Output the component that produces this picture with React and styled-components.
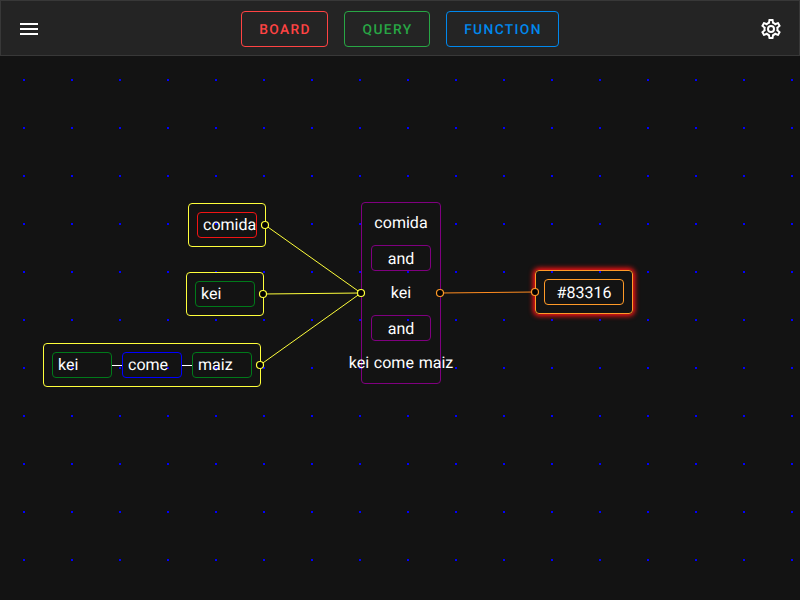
import React from 'react';
import styled, { createGlobalStyle } from 'styled-components';

const GlobalStyle = createGlobalStyle`
  *, *::before, *::after { box-sizing: border-box; }
  body {
    margin: 0;
    background: #131313;
    color: #fff;
    font-family: Roboto, sans-serif;
    font-size: 16px;
    line-height: 24px;
    text-rendering: geometricPrecision;
    overflow: hidden;
  }
`;

const Page = styled.div`
  display: flex;
  flex-direction: column;
  width: 800px;
  height: 600px;
`;

const Toolbar = styled.header`
  flex: none;
  display: flex;
  align-items: center;
  justify-content: space-between;
  height: 56px;
  padding: 2px 16px 0;
  background: #242424;
  border: 1px solid #383838;
`;

const IconButton = styled.button`
  display: flex;
  padding: 0;
  border: 0;
  background: none;
  color: #fff;
`;

const Icon = styled.svg`
  width: 24px;
  height: 24px;
  fill: currentColor;
`;

const Actions = styled.nav`
  display: flex;
  gap: 16px;
`;

const ActionButton = styled.button`
  width: ${(p) => p.$width}px;
  height: 36px;
  padding: 1px 0 0 1px;
  border: 1px solid ${(p) => p.$color};
  border-radius: 4px;
  background: none;
  color: ${(p) => p.$color};
  font: 500 13.8px Roboto, sans-serif;
  letter-spacing: 1.35px;
  text-rendering: geometricPrecision;
`;

const Canvas = styled.main`
  flex: 1;
  position: relative;
  background: conic-gradient(from 270deg at 2px 2px, #0000ff 90deg, transparent 0) 23px 23px / 48px 48px;
`;

const Edges = styled.svg`
  position: absolute;
  inset: 0;
  width: 100%;
  height: 100%;
`;

const Node = styled.div`
  position: absolute;
  left: ${(p) => p.$x}px;
  top: ${(p) => p.$y}px;
  display: flex;
  padding: 8px;
  border: 1px solid ${(p) => p.$color};
  border-radius: 4px;
  box-shadow: ${(p) => (p.$selected ? '0 0 5px 2px #ff1414' : 'none')};
`;

const OperatorNode = styled(Node)`
  flex-direction: column;
  align-items: center;
  gap: 9px;
  width: 80px;
  height: 182px;
  padding: 7px 9px;
`;

const Term = styled.div`
  width: ${(p) => p.$width || 60}px;
  height: 26px;
  padding: ${(p) => (p.$center && p.$color ? '1px 5px 0' : '0 5px')};
  border: 1px solid ${(p) => p.$color || 'transparent'};
  border-radius: 4px;
  display: flex;
  justify-content: ${(p) => (p.$center ? 'center' : 'flex-start')};
  white-space: nowrap;
  letter-spacing: 0.03px;
  word-spacing: 0.7px;
`;

const Link = styled.span`
  align-self: center;
  width: 10px;
  height: 1px;
  background: #fff;
`;

const YELLOW = '#ffff3b';
const ORANGE = '#ff9a28';

const edges = [
  { from: [265, 169], to: [361, 237], color: YELLOW },
  { from: [263, 238], to: [361, 237], color: YELLOW },
  { from: [260, 309], to: [361, 237], color: YELLOW },
  { from: [440, 237], to: [535, 236], color: '#ff8c20' },
];

const ports = [
  [265, 169, YELLOW],
  [263, 238, YELLOW],
  [260, 309, YELLOW],
  [361, 237, YELLOW],
  [440, 237, ORANGE],
  [535, 236, ORANGE],
];

const MENU = 'M3,6H21V8H3V6M3,11H21V13H3V11M3,16H21V18H3V16Z';
const COG =
  'M12,8A4,4 0 0,1 16,12A4,4 0 0,1 12,16A4,4 0 0,1 8,12A4,4 0 0,1 12,8M12,10A2,2 0 0,0 10,12A2,2 0 0,0 12,14A2,2 0 0,0 14,12A2,2 0 0,0 12,10M10,22C9.75,22 9.54,21.82 9.5,21.58L9.13,18.93C8.5,18.68 7.96,18.34 7.44,17.94L4.95,18.95C4.73,19.03 4.46,18.95 4.34,18.73L2.34,15.27C2.21,15.05 2.27,14.78 2.46,14.63L4.57,12.97L4.5,12L4.57,11L2.46,9.37C2.27,9.22 2.21,8.95 2.34,8.73L4.34,5.27C4.46,5.05 4.73,4.96 4.95,5.05L7.44,6.05C7.96,5.66 8.5,5.32 9.13,5.07L9.5,2.42C9.54,2.18 9.75,2 10,2H14C14.25,2 14.46,2.18 14.5,2.42L14.87,5.07C15.5,5.32 16.04,5.66 16.56,6.05L19.05,5.05C19.27,4.96 19.54,5.05 19.66,5.27L21.66,8.73C21.79,8.95 21.73,9.22 21.54,9.37L19.43,11L19.5,12L19.43,13L21.54,14.63C21.73,14.78 21.79,15.05 21.66,15.27L19.66,18.73C19.54,18.95 19.27,19.04 19.05,18.95L16.56,17.95C16.04,18.34 15.5,18.68 14.87,18.93L14.5,21.58C14.46,21.82 14.25,22 14,22H10M11.25,4L10.88,6.61C9.68,6.86 8.62,7.5 7.85,8.39L5.44,7.35L4.69,8.65L6.8,10.2C6.4,11.37 6.4,12.64 6.8,13.8L4.68,15.36L5.43,16.66L7.86,15.62C8.63,16.5 9.68,17.14 10.87,17.38L11.24,20H12.76L13.13,17.39C14.32,17.14 15.37,16.5 16.14,15.62L18.57,16.66L19.32,15.36L17.2,13.81C17.6,12.64 17.6,11.37 17.2,10.2L19.31,8.65L18.56,7.35L16.15,8.39C15.38,7.5 14.32,6.86 13.12,6.62L12.75,4H11.25Z';

export default function App() {
  return (
    <Page>
      <GlobalStyle />
      <Toolbar>
        <IconButton aria-label="Menu">
          <Icon viewBox="0 0 24 24"><path d={MENU} /></Icon>
        </IconButton>
        <Actions>
          <ActionButton $width={87} $color="#ff4343">BOARD</ActionButton>
          <ActionButton $width={86} $color="#28a745">QUERY</ActionButton>
          <ActionButton $width={113} $color="#0088ee">FUNCTION</ActionButton>
        </Actions>
        <IconButton aria-label="Settings">
          <Icon viewBox="0 0 24 24"><path d={COG} /></Icon>
        </IconButton>
      </Toolbar>
      <Canvas>
        <Node $x={188} $y={147} $color={YELLOW}>
          <Term $color="#f11414">comida</Term>
        </Node>
        <Node $x={186} $y={216} $color={YELLOW}>
          <Term $color="#007a1a">kei</Term>
        </Node>
        <Node $x={43} $y={287} $color={YELLOW}>
          <Term $color="#007a1a">kei</Term>
          <Link />
          <Term $color="#0000ff">come</Term>
          <Link />
          <Term $color="#007a1a">maiz</Term>
        </Node>
        <OperatorNode $x={361} $y={146} $color="#800080">
          <Term $center>comida</Term>
          <Term $center $color="#800080">and</Term>
          <Term $center>kei</Term>
          <Term $center $color="#800080">and</Term>
          <Term $center>kei come maiz</Term>
        </OperatorNode>
        <Node $x={535} $y={214} $color={ORANGE} $selected>
          <Term $center $width={80} $color={ORANGE}>#83316</Term>
        </Node>
        <Edges viewBox="0 0 800 544">
          {edges.map(({ from, to, color }) => (
            <line
              key={from.join()}
              x1={from[0]} y1={from[1]} x2={to[0]} y2={to[1]}
              stroke={color}
            />
          ))}
          {ports.map(([x, y, color]) => (
            <circle key={`${x}-${y}`} cx={x} cy={y} r="3.5" fill="#000" stroke={color} strokeWidth="1.2" />
          ))}
        </Edges>
      </Canvas>
    </Page>
  );
}
